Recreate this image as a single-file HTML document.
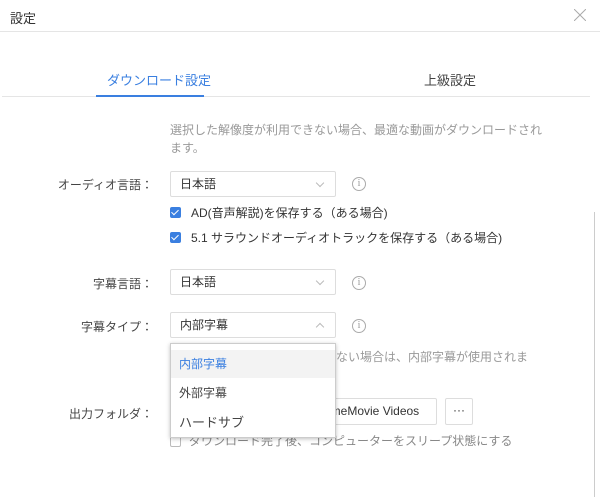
<!DOCTYPE html>
<html><head><meta charset="utf-8"><style>
*{margin:0;padding:0;box-sizing:border-box}
body{width:600px;height:497px;background:#fff;font-family:"Liberation Sans","Noto Sans CJK JP",sans-serif;color:#333;position:relative;overflow:hidden;font-size:12px}
.a{position:absolute;white-space:nowrap}
.sel{position:absolute;left:170px;width:166px;height:26px;border:1px solid #ddd;border-radius:2px;background:#fff;padding-left:9px;line-height:24px;font-size:12px;color:#333}
.lab{position:absolute;right:447px;font-size:12px;color:#444}
.info{position:absolute;left:352px;width:14px;height:14px;border:1px solid #aaa;border-radius:50%;font-size:10px;color:#999;text-align:center;line-height:12px;font-family:"Liberation Serif",serif}
.cb{position:absolute;left:170px;width:11px;height:11px;border-radius:2px;background:#3a7fe0}
.cb::after{content:"";position:absolute;left:3px;top:1px;width:3px;height:6px;border:solid #fff;border-width:0 1.5px 1.5px 0;transform:rotate(45deg)}
.chev{position:absolute;right:12px;top:8px;width:6px;height:6px;border:solid #bbb;border-width:0 1px 1px 0;transform:rotate(45deg)}
</style></head><body>
<div class="a" style="left:10px;top:8px;font-size:13px;color:#333">設定</div>
<svg class="a" style="left:574px;top:9px" width="12" height="12"><path d="M0 0L12 12M12 0L0 12" stroke="#aaa" stroke-width="1"/></svg>
<div class="a" style="left:0;top:31px;width:600px;height:1px;background:#e5e5e5"></div>
<div class="a" style="left:107px;top:70px;font-size:13px;color:#3a7fe0">ダウンロード設定</div>
<div class="a" style="left:424px;top:70px;font-size:13px;color:#444">上級設定</div>
<div class="a" style="left:2px;top:96px;width:588px;height:1px;background:#e5e5e5"></div>
<div class="a" style="left:96px;top:95px;width:108px;height:2px;background:#3a7fe0"></div>
<div class="a" style="left:170px;top:121px;font-size:12px;color:#999;line-height:18px">選択した解像度が利用できない場合、最適な動画がダウンロードされ<br>ます。</div>
<div class="lab" style="top:176px">オーディオ言語：</div>
<div class="sel" style="top:171px">日本語<div class="chev"></div></div>
<div class="info" style="top:177px">i</div>
<div class="cb" style="top:207px"></div><div class="a" style="left:191px;top:204px;font-size:12px">AD(音声解説)を保存する（ある場合)</div>
<div class="cb" style="top:232px"></div><div class="a" style="left:191px;top:229px;font-size:12px">5.1 サラウンドオーディオトラックを保存する（ある場合)</div>
<div class="a" style="left:594px;top:212px;width:1px;height:285px;background:#ccc"></div>
<div class="lab" style="top:275px">字幕言語：</div>
<div class="sel" style="top:269px">日本語<div class="chev"></div></div>
<div class="info" style="top:276px">i</div>
<div class="lab" style="top:318px">字幕タイプ：</div>
<div class="sel" style="top:312px">内部字幕<div class="chev" style="transform:rotate(225deg);top:11px"></div></div>
<div class="info" style="top:319px">i</div>
<div class="a" style="left:336px;top:348px;font-size:12px;color:#999">ない場合は、内部字幕が使用されま</div>
<div class="lab" style="top:405px">出力フォルダ：</div>
<div class="a" style="left:320px;top:398px;width:117px;height:27px;border:1px solid #ddd;border-radius:2px;font-size:12px;line-height:25px;padding-left:3px;overflow:hidden">ameMovie Videos</div>
<div class="a" style="left:445px;top:398px;width:28px;height:27px;border:1px solid #ddd;border-radius:2px;text-align:center;line-height:22px;font-size:12px">···</div>
<div class="a" style="left:170px;top:436px;width:11px;height:11px;border:1px solid #bbb;border-radius:2px"></div>
<div class="a" style="left:189px;top:432px;font-size:12px;color:#888">ダウンロード完了後、コンピューターをスリープ状態にする</div>
<div class="a" style="left:170px;top:343px;width:166px;height:95px;background:#fff;border:1px solid #ccc;box-shadow:0 1px 4px rgba(0,0,0,.25)">
<div style="position:absolute;left:0;top:6px;width:164px;height:28px;background:#f3f3f3"></div>
<div class="a" style="left:8px;top:11px;color:#3a7fe0">内部字幕</div>
<div class="a" style="left:8px;top:40px;color:#444">外部字幕</div>
<div class="a" style="left:8px;top:68px;color:#444;font-size:13px">ハードサブ</div>
</div>
</body></html>
